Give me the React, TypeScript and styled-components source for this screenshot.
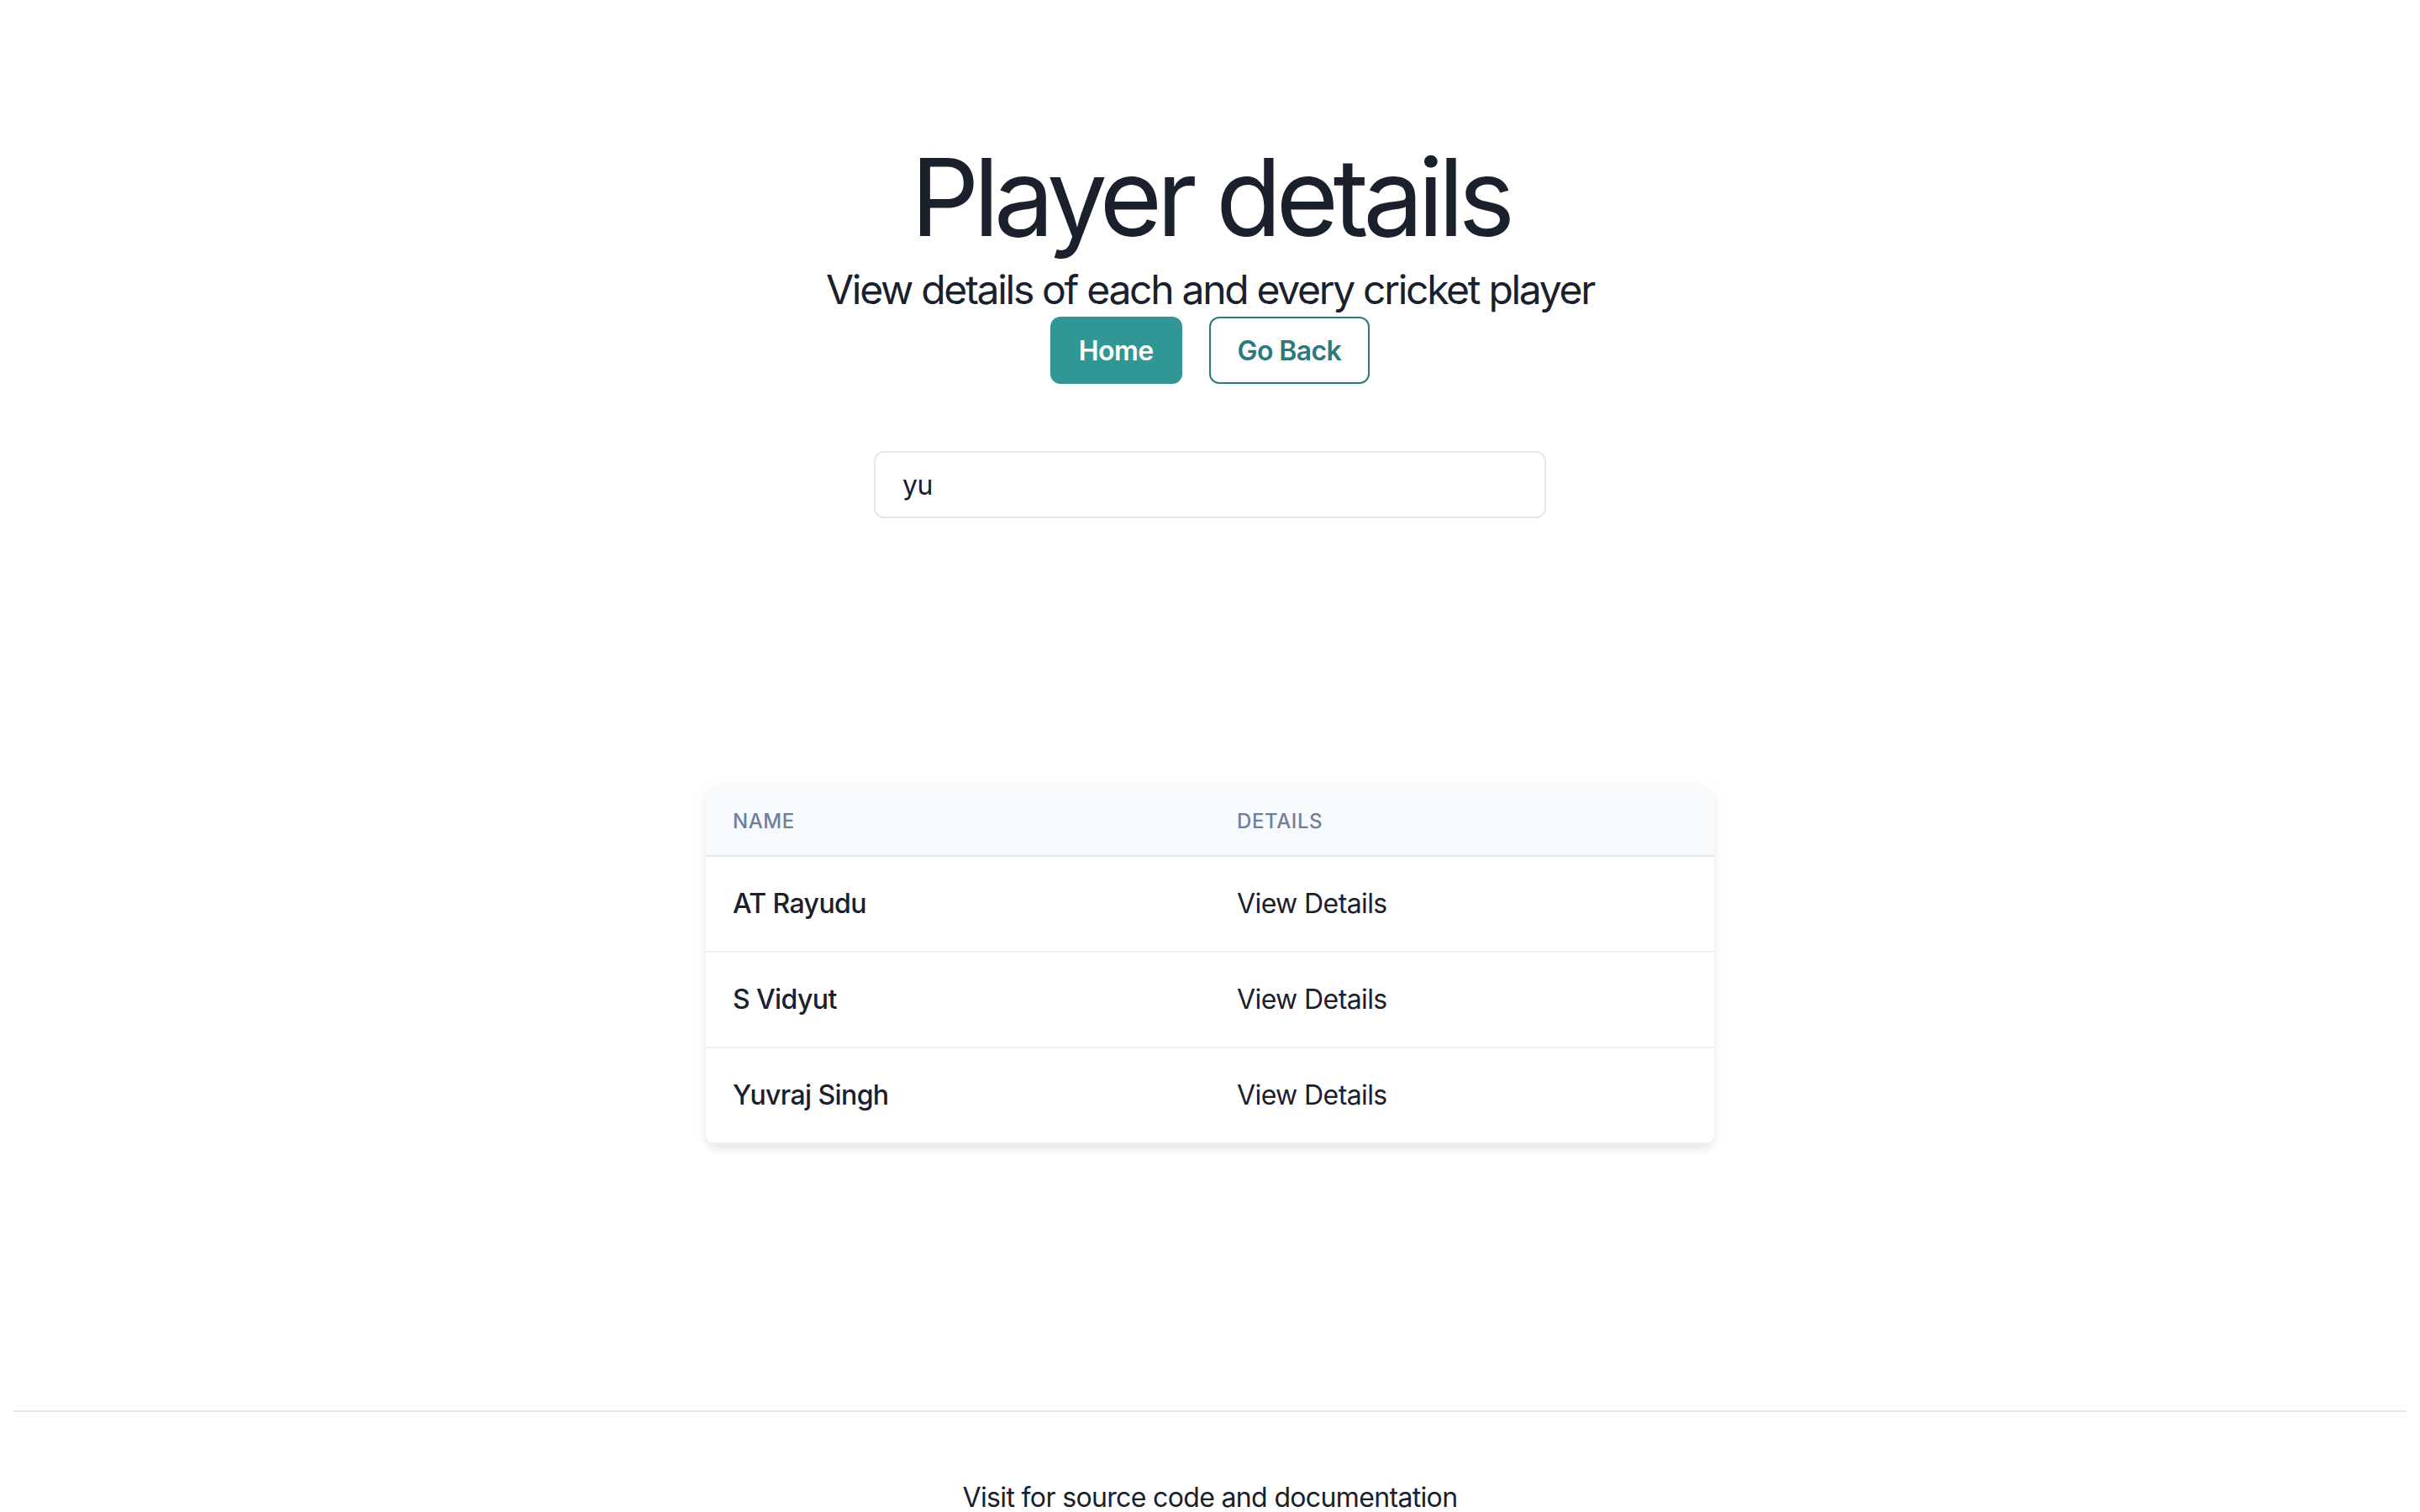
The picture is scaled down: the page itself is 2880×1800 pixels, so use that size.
import React from "react";
import styled, { createGlobalStyle } from "styled-components";

const GlobalStyle = createGlobalStyle`
  html, body { background: #ffffff; }
  body {
    margin: 16px;
    font-family: Inter, "Noto Sans", sans-serif;
    color: #1A202C;
  }
  * { box-sizing: border-box; }
`;

const Page = styled.div`
  display: flex;
  flex-direction: column;
  align-items: center;
`;

const Hero = styled.header`
  display: flex;
  flex-direction: column;
  align-items: center;
  padding-top: 142px;
`;

const Title = styled.h1`
  margin: 0;
  font-size: 128px;
  line-height: 1.2;
  font-weight: 400;
  letter-spacing: -6.8px;
  color: #1A202C;
`;

const Subtitle = styled.p`
  margin: 4px 0 0;
  font-size: 48px;
  line-height: 1.2;
  font-weight: 400;
  letter-spacing: -2.3px;
  color: #1A202C;
`;

const ButtonRow = styled.div`
  display: flex;
  gap: 32px;
  margin-top: 4px;
`;

const Button = styled.button<{ $variant: "solid" | "outline" }>`
  height: 80px;
  padding: 0 32px;
  border-radius: 12px;
  font-family: inherit;
  font-size: 32px;
  font-weight: 600;
  letter-spacing: -0.6px;
  cursor: pointer;
  border: 2px solid ${(p) => (p.$variant === "solid" ? "#319795" : "#2C7A7B")};
  background: ${(p) => (p.$variant === "solid" ? "#319795" : "#ffffff")};
  color: ${(p) => (p.$variant === "solid" ? "#ffffff" : "#2C7A7B")};
`;

const Search = styled.input`
  margin-top: 80px;
  width: 800px;
  height: 80px;
  padding: 0 32px;
  border: 2px solid #E2E8F0;
  border-radius: 12px;
  font-family: inherit;
  font-size: 32px;
  letter-spacing: -0.5px;
  color: #1A202C;
  outline: none;
`;

const TableCard = styled.div`
  margin-top: 321px;
  width: 1200px;
  border-radius: 12px;
  overflow: hidden;
  box-shadow: 0 8px 12px -2px rgba(0, 0, 0, 0.08), 0 0 18px rgba(0, 0, 0, 0.05);
`;

const Table = styled.table`
  width: 100%;
  border-collapse: collapse;
  table-layout: fixed;
`;

const Th = styled.th`
  text-align: left;
  background: #F7FAFC;
  color: #718096;
  font-size: 24px;
  font-weight: 500;
  letter-spacing: 0.6px;
  text-transform: uppercase;
  line-height: 32px;
  padding: 24px 32px;
  border-bottom: 2px solid #E2E8F0;
`;

const Td = styled.td<{ $strong?: boolean }>`
  text-align: left;
  font-size: 32px;
  line-height: 48px;
  padding: 32px 32px;
  letter-spacing: -0.6px;
  font-weight: ${(p) => (p.$strong ? 500 : 400)};
  color: #1A202C;
  border-bottom: 2px solid #EDF2F7;
`;

const Footer = styled.footer`
  align-self: stretch;
  margin-top: 317px;
  border-top: 2px solid #E6E6E6;
  display: flex;
  justify-content: center;
  padding-top: 78px;
`;

const FooterText = styled.p`
  margin: 0;
  font-size: 32px;
  line-height: 48px;
  letter-spacing: -0.65px;
  color: #1A202C;
`;

const players = ["AT Rayudu", "S Vidyut", "Yuvraj Singh"];

export default function App() {
  return (
    <>
      <GlobalStyle />
      <Page>
        <Hero>
          <Title>Player details</Title>
          <Subtitle>View details of each and every cricket player</Subtitle>
          <ButtonRow>
            <Button $variant="solid">Home</Button>
            <Button $variant="outline">Go Back</Button>
          </ButtonRow>
        </Hero>
        <Search defaultValue="yu" />
        <TableCard>
          <Table>
            <thead>
              <tr>
                <Th>Name</Th>
                <Th>Details</Th>
              </tr>
            </thead>
            <tbody>
              {players.map((p) => (
                <tr key={p}>
                  <Td $strong>{p}</Td>
                  <Td>View Details</Td>
                </tr>
              ))}
            </tbody>
          </Table>
        </TableCard>
        <Footer>
          <FooterText>Visit for source code and documentation</FooterText>
        </Footer>
      </Page>
    </>
  );
}
